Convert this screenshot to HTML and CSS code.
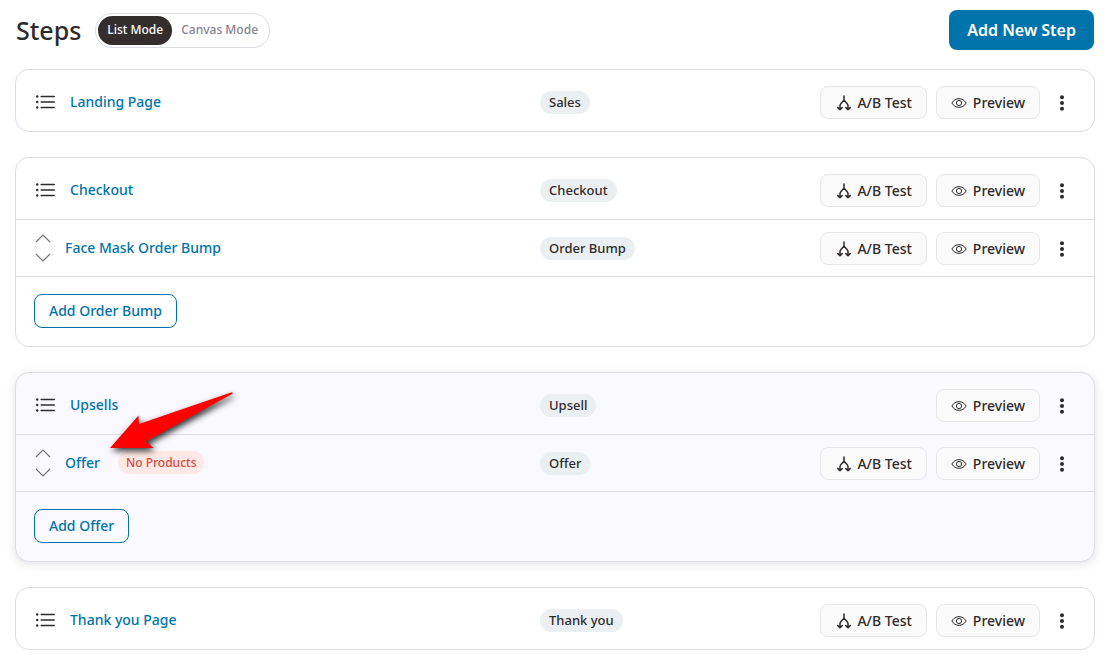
FILE: index.html
```html
<!DOCTYPE html>
<html lang="en">

<head>
    <meta charset="UTF-8">
    <meta name="viewport" content="width=device-width, initial-scale=1.0">
    <title>Steps</title>
    <link rel="stylesheet" href="styles.css">
</head>

<body>

    <!-- Shared icons -->
    <svg class="icon-defs" aria-hidden="true">
        <symbol id="icon-list" viewBox="0 0 20 16">
            <path d="M5.2 2.5H18.2M5.2 8H18.2M5.2 13.5H18.2" fill="none" stroke="currentColor" stroke-width="1.6" stroke-linecap="round" />
            <circle cx="1.2" cy="2.5" r="1.2" fill="currentColor" />
            <circle cx="1.2" cy="8" r="1.2" fill="currentColor" />
            <circle cx="1.2" cy="13.5" r="1.2" fill="currentColor" />
        </symbol>
        <symbol id="icon-split" viewBox="0 0 14 16">
            <path d="M7 1V5.2M7 5.2L4.200 8.200Q3 9.500 3 11V14M7 5.2L9.800 8.200Q11 9.500 11 11V14M0.8 12.600L3 14.600L5.200 12.600M8.800 12.600L11 14.600L13.200 12.600" fill="none" stroke="currentColor" stroke-width="1.5" stroke-linecap="round" stroke-linejoin="round" />
        </symbol>
        <symbol id="icon-eye" viewBox="0 0 16 12">
            <path d="M0.9 6C4 0.2 12 0.2 15.1 6C12 11.8 4 11.8 0.9 6Z" fill="none" stroke="currentColor" />
            <circle cx="8" cy="6" r="2.6" fill="none" stroke="currentColor" />
        </symbol>
        <symbol id="icon-more" viewBox="0 0 20 16">
            <circle cx="10" cy="2.2" r="2" fill="currentColor" />
            <circle cx="10" cy="8" r="2" fill="currentColor" />
            <circle cx="10" cy="13.8" r="2" fill="currentColor" />
        </symbol>
        <symbol id="icon-up" viewBox="0 0 16 9">
            <path d="M1 8L8 1L15 8" fill="none" stroke="currentColor" stroke-width="1.2" />
        </symbol>
        <symbol id="icon-down" viewBox="0 0 16 9">
            <path d="M1 1L8 8L15 1" fill="none" stroke="currentColor" stroke-width="1.2" />
        </symbol>
    </svg>

    <!-- Header -->
    <header class="header">
        <h1>Steps</h1>
        <div class="mode-switch">
            <button class="mode active">List Mode</button>
            <button class="mode">Canvas Mode</button>
        </div>
        <button class="add-step">Add New Step</button>
    </header>

    <!-- Steps -->
    <main class="steps">
        <section class="card">
            <div class="row">
                <div class="name">
                    <svg class="list-icon"><use href="#icon-list" /></svg>
                    <a href="#">Landing Page</a>
                </div>
                <span class="tag">Sales</span>
                <div class="actions">
                    <button class="action ab-test"><svg class="split-icon"><use href="#icon-split" /></svg>A/B Test</button>
                    <button class="action"><svg class="eye-icon"><use href="#icon-eye" /></svg>Preview</button>
                    <button class="more" aria-label="More"><svg class="more-icon"><use href="#icon-more" /></svg></button>
                </div>
            </div>
        </section>

        <section class="card">
            <div class="row">
                <div class="name">
                    <svg class="list-icon"><use href="#icon-list" /></svg>
                    <a href="#">Checkout</a>
                </div>
                <span class="tag">Checkout</span>
                <div class="actions">
                    <button class="action ab-test"><svg class="split-icon"><use href="#icon-split" /></svg>A/B Test</button>
                    <button class="action"><svg class="eye-icon"><use href="#icon-eye" /></svg>Preview</button>
                    <button class="more" aria-label="More"><svg class="more-icon"><use href="#icon-more" /></svg></button>
                </div>
            </div>
            <div class="row sub-row">
                <div class="name">
                    <div class="sort">
                        <button aria-label="Move up"><svg><use href="#icon-up" /></svg></button>
                        <button aria-label="Move down"><svg><use href="#icon-down" /></svg></button>
                    </div>
                    <a href="#">Face Mask Order Bump</a>
                </div>
                <span class="tag">Order Bump</span>
                <div class="actions">
                    <button class="action ab-test"><svg class="split-icon"><use href="#icon-split" /></svg>A/B Test</button>
                    <button class="action"><svg class="eye-icon"><use href="#icon-eye" /></svg>Preview</button>
                    <button class="more" aria-label="More"><svg class="more-icon"><use href="#icon-more" /></svg></button>
                </div>
            </div>
            <div class="card-footer">
                <button class="add-item">Add Order Bump</button>
            </div>
        </section>

        <section class="card highlighted">
            <div class="row">
                <div class="name">
                    <svg class="list-icon"><use href="#icon-list" /></svg>
                    <a href="#">Upsells</a>
                </div>
                <span class="tag">Upsell</span>
                <div class="actions">
                    <button class="action"><svg class="eye-icon"><use href="#icon-eye" /></svg>Preview</button>
                    <button class="more" aria-label="More"><svg class="more-icon"><use href="#icon-more" /></svg></button>
                </div>
            </div>
            <div class="row sub-row">
                <div class="name">
                    <div class="sort">
                        <button aria-label="Move up"><svg><use href="#icon-up" /></svg></button>
                        <button aria-label="Move down"><svg><use href="#icon-down" /></svg></button>
                    </div>
                    <a href="#">Offer</a>
                    <span class="warning">No Products</span>
                </div>
                <span class="tag">Offer</span>
                <div class="actions">
                    <button class="action ab-test"><svg class="split-icon"><use href="#icon-split" /></svg>A/B Test</button>
                    <button class="action"><svg class="eye-icon"><use href="#icon-eye" /></svg>Preview</button>
                    <button class="more" aria-label="More"><svg class="more-icon"><use href="#icon-more" /></svg></button>
                </div>
            </div>
            <div class="card-footer">
                <button class="add-item">Add Offer</button>
            </div>

            <!-- Arrow pointing at the offer -->
            <svg class="arrow" viewBox="0 0 124 60" aria-hidden="true">
                <path d="M0 57L28.500 24.500L29 33L121 1.500Q124 1 122 3L36 50.500L43.500 57Z" fill="#ff0000" />
            </svg>
        </section>

        <section class="card">
            <div class="row">
                <div class="name">
                    <svg class="list-icon"><use href="#icon-list" /></svg>
                    <a href="#">Thank you Page</a>
                </div>
                <span class="tag">Thank you</span>
                <div class="actions">
                    <button class="action ab-test"><svg class="split-icon"><use href="#icon-split" /></svg>A/B Test</button>
                    <button class="action"><svg class="eye-icon"><use href="#icon-eye" /></svg>Preview</button>
                    <button class="more" aria-label="More"><svg class="more-icon"><use href="#icon-more" /></svg></button>
                </div>
            </div>
        </section>
    </main>

</body>

</html>
```
FILE: styles.css
```css
/* Basic reset */
* {
    margin: 0;
    padding: 0;
    box-sizing: border-box;
}

body {
    background-color: #fff;
    color: #2f2b2b;
    font-family: "Segoe UI", "Noto Sans", "Open Sans", sans-serif;
    font-size: 14px;
    font-weight: 500;
    line-height: 20px;
    padding: 10px 13px 13px 15px;
}

button {
    border: none;
    background: none;
    color: inherit;
    font: inherit;
    white-space: nowrap;
    cursor: pointer;
}

a {
    color: #0073aa;
    text-decoration: none;
}

svg {
    display: block;
    flex-shrink: 0;
}

.icon-defs {
    position: absolute;
    width: 0;
    height: 0;
}

/* Header */
.header {
    display: flex;
    align-items: center;
    height: 40px;
    margin-bottom: 19px;
    padding: 0 1px;
}

.header h1 {
    font-size: 25px;
    font-weight: 500;
    line-height: 32px;
}

.mode-switch {
    display: flex;
    margin-left: 14px;
    padding: 2px;
    border: 1px solid #dddbe8;
    border-radius: 17px;
}

.mode {
    height: 29px;
    padding: 0 9px;
    border-radius: 15px;
    color: #85838e;
    font-size: 12px;
}

.mode.active {
    background-color: #332e2d;
    color: #fff;
}

.add-step {
    height: 40px;
    margin-left: auto;
    padding: 0 18px;
    border-radius: 8px;
    background-color: #0073aa;
    color: #fff;
    font-size: 16px;
    font-weight: 600;
}

/* Step cards */
.steps {
    display: flex;
    flex-direction: column;
    gap: 25px;
}

.card {
    position: relative;
    border: 1px solid #dddce8;
    border-radius: 14px;
}

.card.highlighted {
    background-color: #faf9ff;
    box-shadow: 0 2px 10px rgba(60, 60, 90, 0.15);
}

.row {
    display: grid;
    grid-template-columns: 39fr 20fr 21fr;
    align-items: center;
    padding: 16px 22px 12px 18px;
}

.sub-row {
    padding-top: 12px;
    padding-bottom: 11px;
}

.row + .row,
.card-footer {
    border-top: 1px solid #dddce8;
}

.name {
    display: flex;
    align-items: center;
    padding-bottom: 2px;
}

.list-icon {
    width: 20px;
    height: 16px;
    margin: 0 14px 0 2px;
}

.sort {
    display: flex;
    flex-direction: column;
    gap: 10px;
    margin: 0 14px 0 1px;
    color: #77747c;
}

.sort svg {
    width: 16px;
    height: 9px;
}

.tag,
.warning {
    justify-self: start;
    padding: 0 9px;
    border-radius: 12px;
    background-color: #ebeff2;
    font-size: 13px;
    line-height: 23px;
}

.warning {
    margin-left: 18px;
    padding: 0 8px;
    background-color: #ffe8e6;
    color: #dc4b3e;
    font-size: 12px;
}

.actions {
    display: flex;
    justify-self: end;
    align-items: center;
    gap: 9px;
}

.action {
    display: flex;
    align-items: center;
    gap: 6px;
    height: 33px;
    padding: 0 14px;
    border: 1px solid #e8e7ea;
    border-radius: 8px;
    background-color: #fafafa;
}

.action.ab-test {
    padding: 0 14px 0 16px;
}

.split-icon {
    width: 14px;
    height: 16px;
}

.eye-icon {
    width: 16px;
    height: 12px;
}

.more {
    margin-left: 3px;
}

.more-icon {
    width: 20px;
    height: 16px;
}

.card-footer {
    padding: 17px 18px 18px;
}

.add-item {
    height: 34px;
    padding: 0 14px;
    border: 1px solid #0073aa;
    border-radius: 8px;
    color: #0073aa;
}

.arrow {
    position: absolute;
    top: 18px;
    left: 94px;
    width: 124px;
    height: 60px;
    overflow: visible;
    filter: drop-shadow(2px 3px 3px rgba(0, 0, 0, 0.8));
    pointer-events: none;
}
```
